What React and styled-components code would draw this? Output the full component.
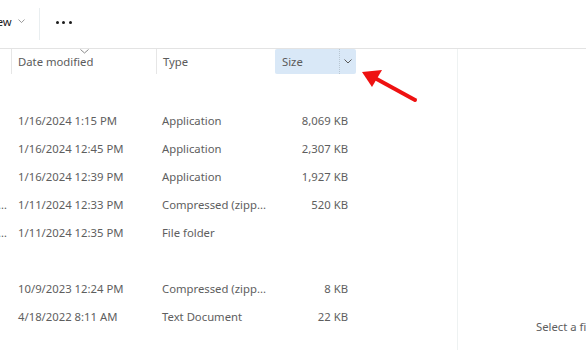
import React from "react";
import styled, { createGlobalStyle } from "styled-components";

const Global = createGlobalStyle`
  html, body { margin: 0; padding: 0; background: #fff; }
  body { width: 586px; height: 350px; overflow: hidden; font-family: "Noto Sans", "Segoe UI", sans-serif; }
`;

const Page = styled.div`
  position: relative;
  width: 586px;
  height: 350px;
  overflow: hidden;
  display: flex;
  flex-direction: column;
`;

const Toolbar = styled.div`
  height: 49px;
  box-sizing: border-box;
  flex: none;
  display: flex;
  align-items: center;
  padding-bottom: 6px;
  border-bottom: 1px solid #e3e3e3;
`;

const ToolButton = styled.div`
  display: flex;
  align-items: center;
  gap: 6px;
  margin-left: -13px;
  font-size: 11.3px;
  color: #1b1b1b;
  padding-right: 14px;
`;

const Chevron = styled.svg`
  width: ${(p) => p.$w || 8}px;
  height: ${(p) => (p.$w ? p.$w / 2 + 1 : 5)}px;
  display: block;
`;

const ToolSep = styled.div`
  width: 1px;
  height: 32px;
  margin-top: 6px;
  background: #e9eef0;
  margin-right: 16px;
`;

const More = styled.div`
  display: flex;
  gap: 3.5px;
  padding-top: 2px;
`;

const Dot = styled.span`
  width: 3px;
  height: 3px;
  border-radius: 50%;
  background: #1b1b1b;
`;

const Main = styled.div`
  flex: 1;
  display: flex;
  min-height: 0;
`;

const List = styled.div`
  width: 457px;
  flex: none;
  border-right: 1px solid #eef2f2;
`;

const Header = styled.div`
  display: grid;
  grid-template-columns: 11px 145px 119px 81px;
  height: 25px;
`;

const HeadCell = styled.div`
  position: relative;
  display: flex;
  align-items: center;
  padding-left: ${(p) => p.$pad}px;
  font-size: 11.3px;
  color: #5b5b5b;
  border-left: ${(p) => (p.$first ? "none" : "1px solid #e6e6e6")};
  background: ${(p) => (p.$active ? "#d9e8f7" : "transparent")};
  border-radius: ${(p) => (p.$active ? "2px" : "0")};
  ${(p) => (p.$active ? "border-left-color: #d9e8f7;" : "")}
`;

const SortMark = styled.svg`
  position: absolute;
  left: 68px;
  top: 0px;
  width: 9px;
  height: 5px;
`;

const HeadLabel = styled.span`
  flex: 1;
  padding-bottom: 1px;
`;

const DropPart = styled.div`
  width: 16px;
  align-self: stretch;
  display: flex;
  align-items: center;
  justify-content: center;
  border-left: 1px dotted #b8c6d2;
`;

const Rows = styled.div`
  padding-top: 4px;
`;

const Row = styled.div`
  display: grid;
  grid-template-columns: 11px 145px 119px 81px;
  height: 28px;
  align-items: center;
  font-size: 11.3px;
  color: #5e5e5e;
`;

const Cell = styled.div`
  padding-left: ${(p) => p.$pad || 0}px;
  padding-right: ${(p) => p.$right || 0}px;
  text-align: ${(p) => (p.$align ? p.$align : "left")};
  white-space: nowrap;
  overflow: hidden;
`;

const NameCell = styled.div`
  color: #5e5e5e;
  white-space: nowrap;
  overflow: hidden;
  margin-left: -2px;
`;

const Preview = styled.div`
  flex: 1;
  display: flex;
  align-items: flex-end;
  padding: 0 0 16px 78px;
  overflow: hidden;
`;

const PreviewText = styled.span`
  font-size: 11.3px;
  color: #5e5e5e;
  white-space: nowrap;
`;

const Arrow = styled.svg`
  position: absolute;
  left: 355px;
  top: 62px;
  width: 70px;
  height: 46px;
  pointer-events: none;
`;

const rows = [
  null,
  { name: "", date: "1/16/2024 1:15 PM", type: "Application", size: "8,069 KB" },
  { name: "", date: "1/16/2024 12:45 PM", type: "Application", size: "2,307 KB" },
  { name: "", date: "1/16/2024 12:39 PM", type: "Application", size: "1,927 KB" },
  { name: "…", date: "1/11/2024 12:33 PM", type: "Compressed (zipp...", size: "520 KB" },
  { name: "…", date: "1/11/2024 12:35 PM", type: "File folder", size: "" },
  null,
  { name: "", date: "10/9/2023 12:24 PM", type: "Compressed (zipp...", size: "8 KB" },
  { name: "", date: "4/18/2022 8:11 AM", type: "Text Document", size: "22 KB" },
];

const ChevronIcon = ({ color = "#6b6b6b", w }) => (
  <Chevron viewBox="0 0 8 5" $w={w}>
    <path d="M0.5 0.5 L4 4 L7.5 0.5" fill="none" stroke={color} strokeWidth="1" />
  </Chevron>
);

export default function App() {
  return (
    <Page>
      <Global />
      <Toolbar>
        <ToolButton>
          View
          <ChevronIcon color="#8a8a8a" w={7} />
        </ToolButton>
        <ToolSep />
        <More>
          <Dot />
          <Dot />
          <Dot />
        </More>
      </Toolbar>
      <Main>
        <List>
          <Header>
            <HeadCell $first $pad={0} />
            <HeadCell $pad={6}>
              <SortMark viewBox="0 0 9 5">
                <path d="M0.5 0.5 L4.5 4 L8.5 0.5" fill="none" stroke="#8a8a8a" strokeWidth="1" />
              </SortMark>
              <HeadLabel>Date modified</HeadLabel>
            </HeadCell>
            <HeadCell $pad={6}>
              <HeadLabel>Type</HeadLabel>
            </HeadCell>
            <HeadCell $pad={6} $active>
              <HeadLabel>Size</HeadLabel>
              <DropPart>
                <ChevronIcon color="#5a5a5a" />
              </DropPart>
            </HeadCell>
          </Header>
          <Rows>
            {rows.map((r, i) =>
              r ? (
                <Row key={i}>
                  <NameCell>{r.name}</NameCell>
                  <Cell $pad={7}>{r.date}</Cell>
                  <Cell $pad={6}>{r.type}</Cell>
                  <Cell $align="right" $right={8}>{r.size}</Cell>
                </Row>
              ) : (
                <Row key={i} />
              )
            )}
          </Rows>
        </List>
        <Preview>
          <PreviewText>Select a file to preview.</PreviewText>
        </Preview>
      </Main>
      <Arrow viewBox="0 0 70 46">
        <line x1="60" y1="38" x2="18" y2="15" stroke="#ee1111" strokeWidth="4" strokeLinecap="round" />
        <polygon points="7,10 27,8 17,25" fill="#ee1111" />
      </Arrow>
    </Page>
  );
}
